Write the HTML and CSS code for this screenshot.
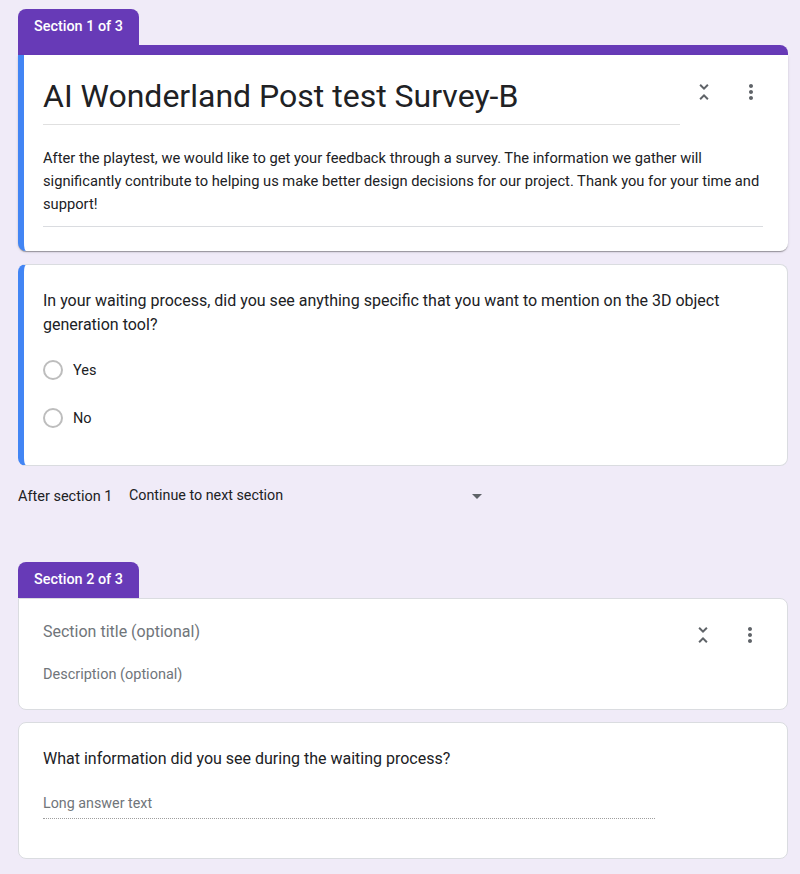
FILE: index.html
```html
<!DOCTYPE html>
<html>
<head>
<meta charset="utf-8">
<link rel="stylesheet" href="styles.css">
</head>
<body>
<div class="page">
  <section class="section">
    <div class="tab">Section 1 of 3</div>
    <div class="strip"></div>
    <div class="card title-card">
      <div class="title-row">
        <div class="title">AI Wonderland Post test Survey-B</div>
        <div class="icons">
          <svg class="icon" viewBox="0 0 24 24"><path d="M7.41 18.59L8.83 20 12 16.83 15.17 20l1.41-1.41L12 14l-4.59 4.59zm9.18-13.180L15.17 4 12 7.17 8.83 4 7.41 5.41 12 10l4.59-4.59z"/></svg>
          <svg class="icon" viewBox="0 0 24 24"><path d="M12 8c1.1 0 2-.9 2-2s-.9-2-2-2-2 .9-2 2 .9 2 2 2zm0 2c-1.1 0-2 .9-2 2s.9 2 2 2 2-.9 2-2-.9-2-2-2zm0 6c-1.1 0-2 .9-2 2s.9 2 2 2 2-.9 2-2-.9-2-2-2z"/></svg>
        </div>
      </div>
      <div class="desc">After the playtest, we would like to get your feedback through a survey. The information we gather will significantly contribute to helping us make better design decisions for our project. Thank you for your time and support!</div>
    </div>

    <div class="card question-card active">
      <div class="question">In your waiting process, did you see anything specific that you want to mention on the 3D object generation tool?</div>
      <div class="options">
        <div class="option"><span class="radio"></span><span>Yes</span></div>
        <div class="option"><span class="radio"></span><span>No</span></div>
      </div>
    </div>

    <div class="after">
      <span class="after-label">After section 1</span>
      <div class="dropdown">
        <span>Continue to next section</span>
        <span class="arrow"></span>
      </div>
    </div>
  </section>

  <section class="section section2">
    <div class="tab">Section 2 of 3</div>
    <div class="card sec-card">
      <div class="sec-row">
        <div class="sec-text">
          <div class="sec-title">Section title (optional)</div>
          <div class="sec-desc">Description (optional)</div>
        </div>
        <div class="icons icons2">
          <svg class="icon" viewBox="0 0 24 24"><path d="M7.41 18.59L8.83 20 12 16.83 15.17 20l1.41-1.41L12 14l-4.59 4.59zm9.18-13.180L15.17 4 12 7.17 8.83 4 7.41 5.41 12 10l4.59-4.59z"/></svg>
          <svg class="icon" viewBox="0 0 24 24"><path d="M12 8c1.1 0 2-.9 2-2s-.9-2-2-2-2 .9-2 2 .9 2 2 2zm0 2c-1.1 0-2 .9-2 2s.9 2 2 2 2-.9 2-2-.9-2-2-2zm0 6c-1.1 0-2 .9-2 2s.9 2 2 2 2-.9 2-2-.9-2-2-2z"/></svg>
        </div>
      </div>
    </div>

    <div class="card question-card long-card">
      <div class="question">What information did you see during the waiting process?</div>
      <div class="long-input">Long answer text</div>
    </div>
  </section>
</div>
</body>
</html>
```

FILE: styles.css
```css
* { box-sizing: border-box; }
html, body {
  margin: 0;
  padding: 0;
  background: #f0ebf8;
}
body {
  font-family: Roboto, "Noto Sans", Arial, sans-serif;
  color: #202124;
}
.page {
  padding: 9px 0 0 18px;
  width: 788px;
}
.tab {
  display: inline-block;
  height: 36px;
  line-height: 36px;
  padding: 0 16px;
  background: #673ab7;
  color: #fff;
  font-size: 14.4px;
  font-weight: 500;
  border-radius: 8px 8px 0 0;
  vertical-align: top;
}
.strip {
  height: 10px;
  background: #673ab7;
  border-radius: 0 8px 0 0;
}
.card {
  background: #fff;
  border: 1px solid #dadce0;
  border-radius: 8px;
  padding: 0 25px 0 24px;
}
.title-card {
  border: none;
  border-left: 6px solid #4285f4;
  border-radius: 0 0 8px 8px;
  padding: 21px 25px 24px 19px;
  box-shadow: 0 2px 1px -1px rgba(0,0,0,.2), 0 1px 1px 0 rgba(0,0,0,.14), 0 1px 3px 0 rgba(0,0,0,.12);
}
.title-row {
  display: flex;
  align-items: flex-start;
}
.title {
  flex: 1;
  font-size: 32px;
  line-height: 40px;
  padding-bottom: 8px;
  border-bottom: 1px solid #e0e0e0;
  white-space: nowrap;
}
.icons {
  display: flex;
  gap: 23px;
  margin-left: 12px;
  margin-top: 4px;
}
.icon {
  width: 24px;
  height: 24px;
  fill: #5f6368;
  display: block;
}
.desc {
  margin-top: 22px;
  font-size: 14.7px;
  line-height: 23px;
  padding-bottom: 10px;
  border-bottom: 1px solid #dadce0;
}
.question-card {
  margin-top: 13px;
  padding-top: 24px;
  padding-bottom: 23px;
}
.question-card.active {
  border-left: 6px solid #4285f4;
  padding-left: 19px;
}
.question {
  font-size: 16px;
  line-height: 24px;
}
.options {
  margin-top: 9px;
}
.option {
  height: 48px;
  display: flex;
  align-items: center;
  font-size: 14.5px;
}
.radio {
  width: 20px;
  height: 20px;
  border: 2px solid #bdbdbd;
  border-radius: 50%;
  margin-right: 10px;
}
.after {
  margin-top: 15px;
  height: 30px;
  display: flex;
  align-items: center;
  font-size: 14.5px;
}
.after-label {
  width: 111px;
}
.dropdown {
  width: 360px;
  display: flex;
  align-items: center;
  justify-content: space-between;
  margin-top: -2px;
  font-size: 14.3px;
}
.arrow {
  width: 0;
  height: 0;
  border-left: 5px solid transparent;
  border-right: 5px solid transparent;
  border-top: 5px solid #5f6368;
  margin-right: 7px;
  margin-top: 2px;
}
.section2 {
  margin-top: 51px;
}
.sec-card {
  border-radius: 0 8px 8px 8px;
  padding-top: 21px;
  padding-bottom: 24px;
}
.sec-row {
  display: flex;
  align-items: flex-start;
}
.sec-text {
  flex: 1;
}
.sec-title {
  font-size: 16px;
  line-height: 24px;
  color: #70757a;
}
.sec-desc {
  margin-top: 21px;
  font-size: 14.5px;
  line-height: 20px;
  color: #70757a;
}
.icons2 {
  margin-top: 3px;
}
.long-card {
  margin-top: 12px;
  padding-top: 24px;
  padding-bottom: 39px;
}
.long-input {
  margin-top: 22px;
  width: 612px;
  font-size: 14.3px;
  line-height: 20px;
  color: #70757a;
  padding-bottom: 5px;
  border-bottom: 1px dotted #9e9e9e;
}
```
